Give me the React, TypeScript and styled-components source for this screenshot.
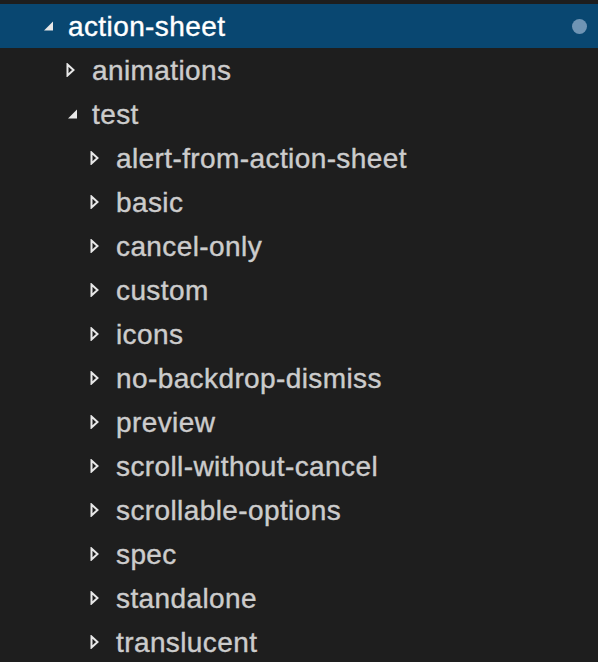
import React from 'react';
import styled, { createGlobalStyle } from 'styled-components';

const GlobalStyle = createGlobalStyle`
  html, body {
    margin: 0;
    padding: 0;
    background: #1e1e1e;
  }
`;

const Explorer = styled.div`
  width: 598px;
  height: 662px;
  overflow: hidden;
  background: #1e1e1e;
  padding-top: 4px;
  box-sizing: border-box;
  font-family: 'Liberation Sans', Arial, sans-serif;
`;

const Row = styled.div<{ $depth: number; $selected?: boolean }>`
  display: flex;
  align-items: center;
  height: 44px;
  padding-left: ${(p) => 42 + p.$depth * 24}px;
  padding-right: 12px;
  background: ${(p) => (p.$selected ? '#094771' : 'transparent')};
  color: ${(p) => (p.$selected ? '#ffffff' : '#cccccc')};
`;

const Twistie = styled.span`
  display: flex;
  align-items: center;
  justify-content: flex-start;
  width: 26px;
  height: 44px;
  flex: none;
`;

const Label = styled.span`
  font-size: 28px;
  letter-spacing: 0.4px;
  -webkit-text-stroke: 0.4px currentColor;
  white-space: nowrap;
  flex: 1;
  padding-top: 1px;
`;

const Dot = styled.span`
  width: 15px;
  height: 15px;
  border-radius: 50%;
  background: #6f94b4;
  flex: none;
  margin-right: -1px;
`;

const Expanded = () => (
  <svg width="12" height="12" viewBox="0 0 12 12">
    <polygon points="11,1.5 11,10.5 2,10.5" fill="#e8e8e8" />
  </svg>
);

const Collapsed = () => (
  <svg width="10" height="14" viewBox="0 0 10 14">
    <polygon points="1.5,1.5 7.5,7 1.5,12.5" fill="none" stroke="#e8e8e8" strokeWidth="2" strokeLinejoin="miter" />
  </svg>
);

type Item = { name: string; depth: number; open?: boolean; selected?: boolean; dirty?: boolean };

const items: Item[] = [
  { name: 'action-sheet', depth: 0, open: true, selected: true, dirty: true },
  { name: 'animations', depth: 1 },
  { name: 'test', depth: 1, open: true },
  { name: 'alert-from-action-sheet', depth: 2 },
  { name: 'basic', depth: 2 },
  { name: 'cancel-only', depth: 2 },
  { name: 'custom', depth: 2 },
  { name: 'icons', depth: 2 },
  { name: 'no-backdrop-dismiss', depth: 2 },
  { name: 'preview', depth: 2 },
  { name: 'scroll-without-cancel', depth: 2 },
  { name: 'scrollable-options', depth: 2 },
  { name: 'spec', depth: 2 },
  { name: 'standalone', depth: 2 },
  { name: 'translucent', depth: 2 },
];

export default function App() {
  return (
    <>
      <GlobalStyle />
      <Explorer>
        {items.map((item) => (
          <Row key={item.name} $depth={item.depth} $selected={item.selected}>
            <Twistie>{item.open ? <Expanded /> : <Collapsed />}</Twistie>
            <Label>{item.name}</Label>
            {item.dirty && <Dot />}
          </Row>
        ))}
      </Explorer>
    </>
  );
}
